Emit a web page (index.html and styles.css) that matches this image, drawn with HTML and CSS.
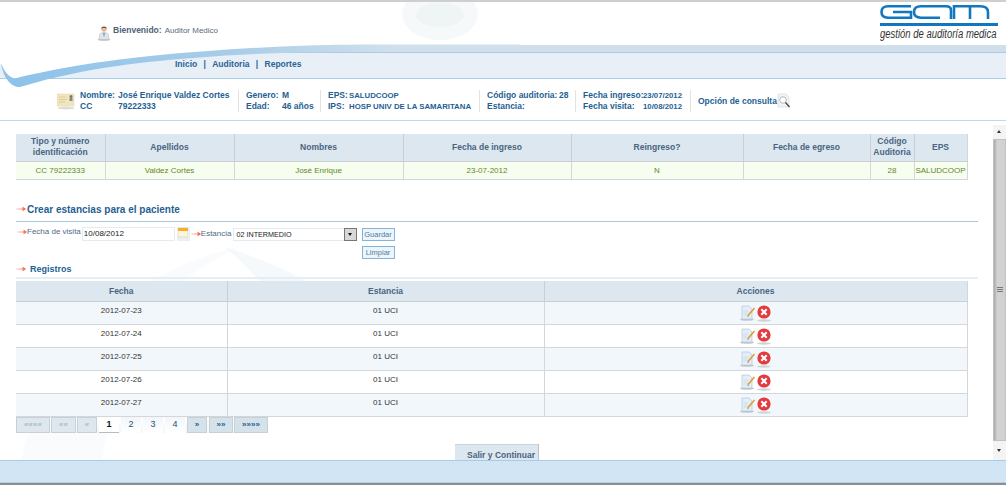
FILE: index.html
```html
<!DOCTYPE html>
<html lang="es">
<head>
    <meta charset="UTF-8">
    <title>GAM - Crear estancias</title>
    <link rel="stylesheet" href="styles.css">
</head>
<body>
    <svg class="defs" width="0" height="0">
        <defs>
            <linearGradient id="arrow-fade" x1="0" x2="1" y1="0" y2="0">
                <stop offset="0" stop-color="#fbd5cc"/>
                <stop offset="1" stop-color="#ee5a3c"/>
            </linearGradient>
            <symbol id="arrow" viewBox="0 0 10 8">
                <path d="M0 3.4h6.5V1.5L10 4 6.5 6.5V4.6H0z" fill="url(#arrow-fade)"/>
            </symbol>
            <symbol id="edit" viewBox="0 0 16 16">
                <ellipse cx="7" cy="14.5" rx="7" ry="1.3" fill="#c4c8c8"/>
                <path d="M2 1h7l3 3v10H2z" fill="#e4eef8" stroke="#b3c6d8" stroke-width=".7"/>
                <path d="M3.5 6h5M3.5 8h4M3.5 10h5" stroke="#c6d6e6" stroke-width=".7"/>
                <path d="M8 10.5 14.5 3" stroke="#e09a2a" stroke-width="1.5"/>
                <path d="M8 10.5 7.3 12l1.5-.7z" fill="#555"/>
            </symbol>
            <symbol id="delete" viewBox="0 0 16 17">
                <ellipse cx="8" cy="15.5" rx="7" ry="1.2" fill="#d0d3d3"/>
                <circle cx="8" cy="7" r="6.6" fill="#e23a3e"/>
                <path d="M5.3 4.3l5.4 5.4M10.7 4.3l-5.4 5.4" stroke="#fff" stroke-width="2"/>
            </symbol>
        </defs>
    </svg>

    <div class="page">
        <!-- curva azul y marcas de agua -->
        <svg class="swoosh" width="520" height="92" viewBox="0 0 520 92">
            <defs>
                <linearGradient id="swoosh-fade" x1="0" x2="1" y1="0" y2="0">
                    <stop offset="0" stop-color="#8cc2ea"/>
                    <stop offset=".45" stop-color="#a9cde8"/>
                    <stop offset=".75" stop-color="#cfe0ec"/>
                    <stop offset="1" stop-color="#cfe0ec"/>
                </linearGradient>
            </defs>
            <path d="M0 44H360C250 47 130 56 70 68 40 74 22 79 17 79 9 79 3 72 0 63z" fill="#fff"/>
            <path d="M1 63C5 74 11 79 17 78 40 72 90 62 150 56 230 48 300 45 360 44.5H520V52H340C260 52 170 58 110 67 70 73 40 81 20 87 12 88 3 78 1 63z" fill="url(#swoosh-fade)"/>
        </svg>
        <svg class="mark-top" width="90" height="42" viewBox="0 0 90 42">
            <ellipse cx="45" cy="12" rx="38" ry="26" fill="#f6f9f9"/>
            <ellipse cx="45" cy="13" rx="24" ry="12" fill="#eff5f4"/>
        </svg>
        <svg class="mark-main" width="560" height="243" viewBox="0 0 560 243">
            <path d="M115 95C150 60 190 40 240 30 170 60 130 110 100 250H20C30 190 70 140 115 95z" fill="#f9fbfd"/>
            <path d="M225 30C290 50 370 90 395 155H310C300 110 270 70 225 30z" fill="#f6f9fc"/>
        </svg>

        <header class="top">
            <div class="welcome">
                <svg class="user-icon" width="14" height="18" viewBox="0 0 16 19">
                    <ellipse cx="8" cy="17" rx="7.5" ry="1.8" fill="#d2d2d2"/>
                    <path d="M2.5 17c0-6 1-8 5.5-8s5.5 2 5.5 8z" fill="#dfe6ea" stroke="#9ca7ad" stroke-width=".5"/>
                    <path d="M7 9.5h2l-1 5z" fill="#6a8aa8"/>
                    <circle cx="8" cy="5" r="3.1" fill="#e6b99a"/>
                    <path d="M4.8 4.5C5 1.8 11 1.8 11.2 4.5 9.5 3.3 6.5 3.3 4.8 4.5z" fill="#6d4630"/>
                </svg>
                <strong>Bienvenido:</strong>
                <span>Auditor Medico</span>
            </div>
            <div class="logo">
                <svg width="118" height="21" viewBox="0 0 118 21">
                    <g fill="none" stroke="#1178bf" stroke-width="2.6">
                        <path d="M31 1.3H8Q1.5 1.3 1.5 7T8 12.7H31V7H13"/>
                        <path d="M71 14V5Q71 1.3 66 1.3H41Q34 1.3 34 7T41 12.7H60"/>
                        <path d="M74 14V1.3H100Q108 1.3 108 7V14M90 1.3V14"/>
                    </g>
                    <rect y="18" width="118" height="3" fill="#1178bf"/>
                </svg>
                <span class="logo-text">gestión de auditoría medica</span>
            </div>
        </header>

        <nav class="band">
            <div class="band-strip"></div>
            <div class="menu">
                <a>Inicio</a><i>|</i><a>Auditoria</a><i>|</i><a>Reportes</a>
            </div>
        </nav>

        <section class="patient">
            <svg class="card-icon" width="18" height="18" viewBox="0 0 18 18">
                <ellipse cx="9" cy="16" rx="8.5" ry="1.5" fill="#dcdcdc"/>
                <rect x="0" y="2" width="17" height="12" fill="#f1e5bd" stroke="#e1d4a6" stroke-width=".5"/>
                <path d="M2 5h7M2 7.5h8M2 10h6" stroke="#d8c994" stroke-width=".8"/>
                <circle cx="14" cy="4.5" r="1.5" fill="#777"/>
                <rect x="12.5" y="6" width="3" height="3" fill="#888"/>
            </svg>
            <div class="p-group p-name">
                <p><b class="l-name">Nombre:</b>José Enrique Valdez Cortes</p>
                <p><b class="l-name">CC</b>79222333</p>
            </div>
            <div class="p-group p-gender">
                <p><b class="l-gender">Genero:</b>M</p>
                <p><b class="l-gender">Edad:</b>46 años</p>
            </div>
            <div class="p-group p-eps">
                <p><b class="l-eps">EPS:</b><span class="caps">SALUDCOOP</span></p>
                <p><b class="l-eps">IPS:</b><span class="caps">HOSP UNIV DE LA SAMARITANA</span></p>
            </div>
            <div class="p-group p-code">
                <p><b class="l-code">Código auditoria:</b>28</p>
                <p><b class="l-code">Estancia:</b></p>
            </div>
            <div class="p-group p-dates">
                <p><b class="l-date">Fecha ingreso:</b><span class="caps">23/07/2012</span></p>
                <p><b class="l-date">Fecha visita:</b><span class="caps">10/08/2012</span></p>
            </div>
            <div class="p-query">
                <span>Opción de consulta</span>
                <svg width="14" height="16" viewBox="0 0 14 16">
                    <path d="M1 1h8l3 3v10H1z" fill="#f2f3f3" stroke="#d5d8d8" stroke-width=".6"/>
                    <circle cx="6" cy="7" r="3.3" fill="#fff" stroke="#b6bcc0"/>
                    <path d="M8.5 9.5 12.5 14" stroke="#444" stroke-width="1.3"/>
                </svg>
            </div>
        </section>

        <div class="middle">
            <main class="content">
                <table class="grid grid-patient">
                    <colgroup>
                        <col class="c1"><col class="c2"><col class="c3"><col class="c4"><col class="c5"><col class="c6"><col class="c7"><col class="c8">
                    </colgroup>
                    <thead>
                        <tr>
                            <th>Tipo y número identificación</th>
                            <th>Apellidos</th>
                            <th>Nombres</th>
                            <th>Fecha de ingreso</th>
                            <th>Reingreso?</th>
                            <th>Fecha de egreso</th>
                            <th>Código Auditoria</th>
                            <th>EPS</th>
                        </tr>
                    </thead>
                    <tbody>
                        <tr>
                            <td>CC 79222333</td>
                            <td>Valdez Cortes</td>
                            <td>José Enrique</td>
                            <td>23-07-2012</td>
                            <td>N</td>
                            <td></td>
                            <td>28</td>
                            <td>SALUDCOOP</td>
                        </tr>
                    </tbody>
                </table>

                <h2 class="section-title"><svg width="10" height="8"><use href="#arrow"/></svg>Crear estancias para el paciente</h2>

                <form class="visit-form">
                    <svg class="fa1" width="10" height="8"><use href="#arrow"/></svg>
                    <label class="f-label">Fecha de visita</label>
                    <input class="f-date" type="text" value="10/08/2012">
                    <span class="f-cal">
                        <svg width="10" height="11" viewBox="0 0 10 11">
                            <rect y="1" width="10" height="9" fill="#fdf6dc" stroke="#d9c68f" stroke-width=".5"/>
                            <rect y="1" width="10" height="3" fill="#f0b030"/>
                        </svg>
                    </span>
                    <svg class="fa2" width="10" height="8"><use href="#arrow"/></svg>
                    <label class="f-label f-label-2">Estancia</label>
                    <div class="f-select">
                        <span>02 INTERMEDIO</span>
                        <span class="f-drop"></span>
                    </div>
                    <div class="f-buttons">
                        <button type="button">Guardar</button>
                        <button type="button">Limpiar</button>
                    </div>
                </form>

                <h3 class="sub-title"><svg width="10" height="8"><use href="#arrow"/></svg>Registros</h3>

                <table class="grid grid-stays">
                    <colgroup>
                        <col class="s1"><col class="s2"><col class="s3">
                    </colgroup>
                    <thead>
                        <tr><th>Fecha</th><th>Estancia</th><th>Acciones</th></tr>
                    </thead>
                    <tbody>
                        <tr>
                            <td>2012-07-23</td><td>01 UCI</td>
                            <td class="actions"><svg width="16" height="16"><use href="#edit"/></svg><svg width="16" height="17"><use href="#delete"/></svg></td>
                        </tr>
                        <tr>
                            <td>2012-07-24</td><td>01 UCI</td>
                            <td class="actions"><svg width="16" height="16"><use href="#edit"/></svg><svg width="16" height="17"><use href="#delete"/></svg></td>
                        </tr>
                        <tr>
                            <td>2012-07-25</td><td>01 UCI</td>
                            <td class="actions"><svg width="16" height="16"><use href="#edit"/></svg><svg width="16" height="17"><use href="#delete"/></svg></td>
                        </tr>
                        <tr>
                            <td>2012-07-26</td><td>01 UCI</td>
                            <td class="actions"><svg width="16" height="16"><use href="#edit"/></svg><svg width="16" height="17"><use href="#delete"/></svg></td>
                        </tr>
                        <tr>
                            <td>2012-07-27</td><td>01 UCI</td>
                            <td class="actions"><svg width="16" height="16"><use href="#edit"/></svg><svg width="16" height="17"><use href="#delete"/></svg></td>
                        </tr>
                    </tbody>
                </table>

                <div class="pager">
                    <a class="pg off w34">««««</a>
                    <a class="pg off w25">««</a>
                    <a class="pg off w20">«</a>
                    <a class="num active">1</a>
                    <a class="num">2</a>
                    <a class="num">3</a>
                    <a class="num">4</a>
                    <a class="pg w20 next">»</a>
                    <a class="pg w24">»»</a>
                    <a class="pg w34">»»»»</a>
                </div>

                <div class="exit-row">
                    <button type="button" class="exit">Salir y Continuar</button>
                </div>
            </main>

            <div class="scrollbar">
                <span class="sb-btn sb-up"></span>
                <span class="sb-thumb"><i></i></span>
                <span class="sb-btn sb-down"></span>
            </div>
        </div>

        <footer class="bottom"></footer>
        <div class="taskbar"></div>
    </div>
</body>
</html>
```

FILE: styles.css
```css
* {
    box-sizing: border-box;
}

html, body {
    margin: 0;
    padding: 0;
    background: #fff;
    overflow: hidden;
}

body {
    font-family: "Liberation Sans", Arial, sans-serif;
    font-size: 9px;
}

.defs {
    display: block;
    height: 0;
}

.page {
    position: relative;
    width: 1006px;
    height: 485px;
    display: flex;
    flex-direction: column;
    border-top: 2px solid #cfcfcf;
    overflow: hidden;
}

.swoosh {
    position: absolute;
    left: 0;
    top: -2px;
    z-index: 2;
}

.mark-top {
    position: absolute;
    left: 395px;
    top: 0;
}

.mark-main {
    position: absolute;
    left: 0;
    top: 215px;
}

/* cabecera */
.top {
    position: relative;
    height: 43px;
    display: flex;
    justify-content: space-between;
    padding: 0 8px 0 97px;
    z-index: 3;
}

.welcome {
    display: flex;
    align-items: flex-start;
    height: 18px;
    margin-top: 22px;
    color: #5a6b7c;
    font-size: 8px;
    line-height: 13px;
}

.user-icon {
    margin-right: 2px;
}

.welcome strong {
    color: #4d6277;
    font-size: 8.5px;
    margin-right: 3px;
}

.logo {
    width: 118px;
    display: flex;
    flex-direction: column;
    margin-top: 3px;
}

.logo svg {
    display: block;
}

.logo-text {
    display: block;
    font-style: italic;
    font-size: 12px;
    line-height: 15px;
    color: #333;
    white-space: nowrap;
    margin-top: 1px;
    transform: scaleX(.79);
    transform-origin: left;
}

.band {
    height: 34px;
    background: #e8eff7;
    border-bottom: 1px solid #a9cfe8;
}

.band-strip {
    height: 8px;
    background: #cfe0ec;
    border-bottom: 1px solid #a9cbe3;
}

.menu {
    position: relative;
    z-index: 3;
    display: flex;
    padding: 4px 0 0 175px;
    color: #2a6496;
    font-weight: bold;
    font-size: 8.5px;
    line-height: 14px;
}

.menu i {
    font-style: normal;
    width: 15px;
    text-align: center;
}

/* datos del paciente */
.patient {
    height: 42px;
    display: flex;
    align-items: center;
    padding: 3px 0 0 57px;
    border-bottom: 1px solid #bcd8ec;
    color: #1f5f93;
    font-weight: bold;
    font-size: 8.5px;
    position: relative;
    z-index: 3;
}

.card-icon {
    flex: none;
    margin-right: 5px;
}

.p-group {
    height: 22px;
    border-right: 1px solid #e3e3e3;
    flex: none;
}

.p-group p {
    margin: 0;
    height: 11px;
    line-height: 11px;
    white-space: nowrap;
    display: flex;
}

.p-group b {
    flex: none;
}

.caps {
    font-size: 7.8px;
}

.p-name { width: 159px; }
.p-gender { width: 82px; padding-left: 7px; }
.p-eps { width: 159px; padding-left: 7px; }
.p-code { width: 96px; padding-left: 7px; }
.p-dates { width: 115px; padding-left: 7px; }

.l-name { width: 38px; }
.l-gender { width: 36px; }
.l-eps { width: 21px; }
.l-code { width: 72px; }
.l-date { width: 60px; }

.p-query {
    display: flex;
    align-items: center;
    padding-left: 7px;
}

/* zona central */
.middle {
    position: relative;
    flex: 1;
    display: flex;
    min-height: 0;
}

.content {
    width: 993px;
    padding: 13px 0 0 16px;
    display: flex;
    flex-direction: column;
    align-items: flex-start;
}

.content > * {
    flex: none;
}

.grid {
    width: 951px;
    table-layout: fixed;
    border-collapse: collapse;
    color: #333;
    font-size: 8px;
}

.grid th {
    background: #dce7f0;
    color: #4a6580;
    font-size: 8.5px;
    font-weight: bold;
    border-bottom: 1px solid #c9cfd3;
    border-left: 1px solid #c9cfd3;
    padding: 0 2px;
    line-height: 11px;
    text-align: center;
}

.grid th:first-child,
.grid td:first-child {
    border-left: none;
}

.grid td {
    border-bottom: 1px solid #d3d7d9;
    border-left: 1px solid #d3d7d9;
    text-align: center;
    padding: 0;
}

.grid-patient th { height: 27px; }
.grid-patient td {
    height: 18px;
    background: #f7fdef;
    color: #5c8a1e;
}

.grid-patient { border-right: 1px solid #d3d7d9; }

.c1 { width: 89px; }
.c2 { width: 129px; }
.c3 { width: 169px; }
.c4 { width: 168px; }
.c5 { width: 172px; }
.c6 { width: 127px; }
.c7 { width: 44px; }
.c8 { width: 53px; }

.section-title {
    width: 962px;
    margin: 22px 0 0;
    height: 20px;
    display: flex;
    align-items: center;
    font-size: 10px;
    color: #1f5f93;
    border-bottom: 1px solid #a9c8e2;
    padding-bottom: 4px;
}

.section-title svg {
    margin-right: 1px;
}

.visit-form {
    position: relative;
    display: flex;
    align-items: flex-start;
    height: 39px;
    padding-top: 5px;
    color: #4f6b85;
    font-size: 8px;
}

.fa1 { margin: 1px 0 0 1px; }
.fa2 { margin: 3px 0 0 1px; }

.f-label {
    line-height: 10px;
    margin-right: 1px;
}

.f-label-2 {
    line-height: 14px;
}

.f-date {
    width: 93px;
    height: 14px;
    border: 1px solid #e3ecf3;
    background: #fff;
    padding: 0 1px;
    font: 8px "Liberation Sans", sans-serif;
    color: #222;
    margin-right: 2px;
}

.f-cal {
    width: 13px;
    height: 14px;
    background: #e8f0f6;
    display: flex;
    justify-content: center;
}

.f-select {
    width: 124px;
    height: 13px;
    margin-top: 1px;
    background: #fff;
    border: 1px solid #e3ecf3;
    color: #222;
    font-size: 7.2px;
    line-height: 11px;
    padding-left: 3px;
    display: flex;
    justify-content: space-between;
}

.f-drop {
    width: 13px;
    height: 13px;
    margin: -1px -1px 0 0;
    background: #d8d8d8;
    border: 1px solid #777;
    position: relative;
}

.f-drop::after {
    content: "";
    position: absolute;
    left: 3px;
    top: 4px;
    border: 2.5px solid transparent;
    border-top: 3px solid #111;
}

.f-buttons {
    display: flex;
    flex-direction: column;
    gap: 5px;
    margin: 1px 0 0 5px;
}

.f-buttons button {
    width: 33px;
    height: 13px;
    padding: 0;
    background: #eef5fa;
    border: 1px solid #7fb7dc;
    color: #4d7ea5;
    font: 7.5px "Liberation Sans", sans-serif;
}

.sub-title {
    width: 962px;
    height: 18px;
    margin: 0;
    display: flex;
    align-items: center;
    gap: 4px;
    color: #1f5f93;
    font-size: 9px;
    border-bottom: 2px solid #e4eef6;
}

.grid-stays {
    margin-top: 2px;
    border-right: 1px solid #d3d7d9;
}

.grid-stays th {
    height: 21px;
    padding-top: 1px;
}

.grid-stays td {
    height: 23px;
    padding-bottom: 5px;
    background: #fff;
}

.grid-stays td.actions {
    padding-bottom: 0;
}

.grid-stays tbody tr:nth-child(odd) td {
    background: #f2f7fc;
}

.grid-stays td svg {
    vertical-align: middle;
}

.s1 { width: 211px; }
.s2 { width: 317px; }
.s3 { width: 423px; }

/* paginador */
.pager {
    display: flex;
    gap: 1px;
    height: 16px;
    background: linear-gradient(#fff, #f3f7fa);
    width: 252px;
    align-items: flex-start;
}

.pg {
    height: 16px;
    background: #d5e2ea;
    border: 1px solid #c6d0d6;
    color: #1f5f93;
    text-align: center;
    line-height: 13px;
    font-weight: bold;
    font-size: 8px;
}

.pg.off {
    color: #a9bcc8;
    background: #dde7ed;
}

.w20 { width: 20px; }
.w24 { width: 24px; margin-left: 1px; }
.w25 { width: 25px; }
.w34 { width: 34px; }
.next { margin-left: 1px; }

.num {
    width: 20px;
    height: 16px;
    margin-left: 1px;
    text-align: center;
    line-height: 15px;
    font-size: 9px;
    color: #1f4f73;
    background: linear-gradient(#f1f6fa, #fff);
}

.num.active {
    background: #fff;
    color: #111;
    font-weight: bold;
    border-bottom: 1px solid #bbb;
}

.exit-row {
    margin: 11px 0 0 439px;
}

.exit {
    display: block;
    width: 84px;
    height: 17px;
    padding: 4px 0 0 12px;
    background: #dce7f0;
    border: none;
    border-right: 1px solid #b9c3ca;
    border-top: 1px solid #c9d3da;
    color: #4a6580;
    text-align: left;
    font: bold 8.5px "Liberation Sans", sans-serif;
}

/* barra de desplazamiento */
.scrollbar {
    width: 13px;
    margin-top: 4px;
    display: flex;
    flex-direction: column;
    background: #f4f4f4;
}

.sb-btn {
    height: 14px;
    position: relative;
    flex: none;
}

.sb-down {
    height: 19px;
}

.sb-btn::after {
    content: "";
    position: absolute;
    left: 4px;
    border: 2.5px solid transparent;
}

.sb-up::after {
    top: 3px;
    border-bottom: 3px solid #333;
}

.sb-down::after {
    top: 8px;
    border-top: 3px solid #333;
}

.sb-thumb {
    flex: 1;
    background: linear-gradient(90deg, #a9a9a9, #d4d4d4 30%, #d0d0d0);
    border: 1px solid #c2c2c2;
    display: flex;
    align-items: center;
    justify-content: center;
}

.sb-thumb i {
    width: 6px;
    height: 6px;
    background: repeating-linear-gradient(#777 0 1px, transparent 1px 2px);
}

.bottom {
    position: relative;
    height: 23px;
    background: #d2e5f4;
    border-top: 1px solid #a9cbe3;
    border-bottom: 1px solid #b6cfe0;
}

.taskbar {
    height: 2px;
    background: #8a8f92;
}
```
